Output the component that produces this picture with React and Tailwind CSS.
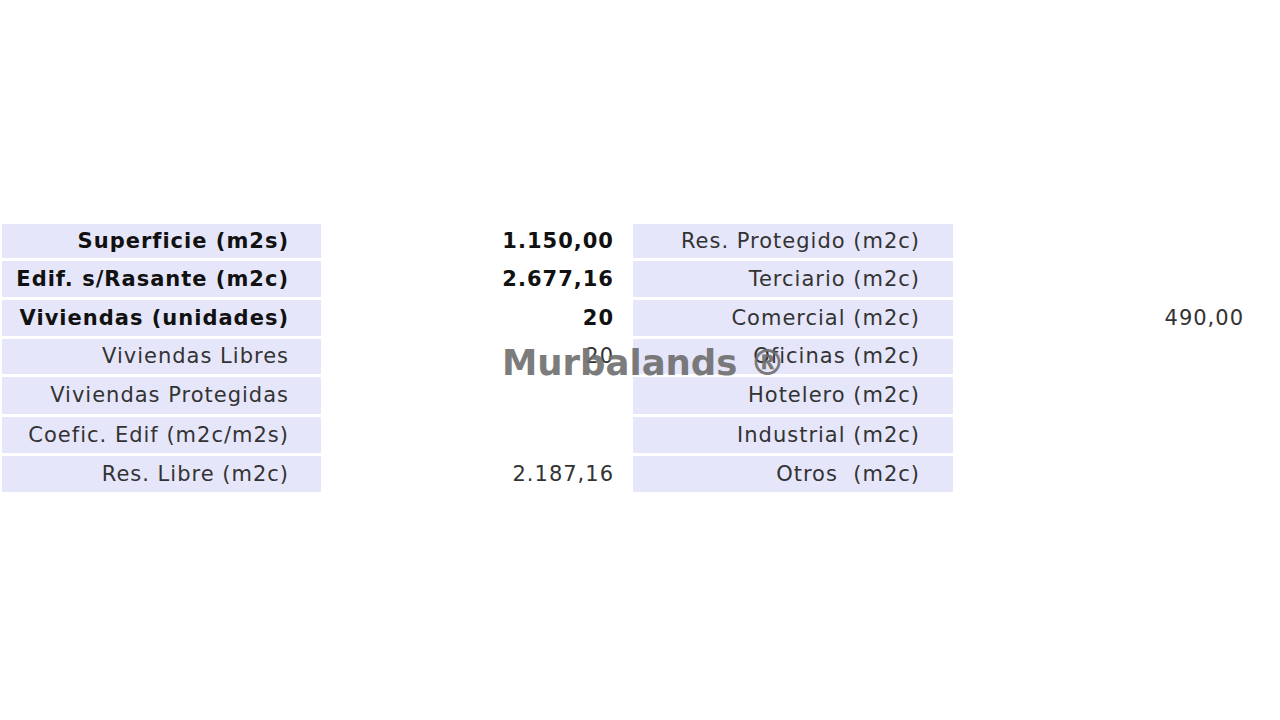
import React from "react";

const rows = [
  { h: "h-[34px]", l1: "Superficie (m2s)", v1: "1.150,00", b: true, l2: "Res. Protegido (m2c)", v2: "" },
  { h: "h-[36px]", l1: "Edif. s/Rasante (m2c)", v1: "2.677,16", b: true, l2: "Terciario (m2c)", v2: "" },
  { h: "h-[36px]", l1: "Viviendas (unidades)", v1: "20", b: true, l2: "Comercial (m2c)", v2: "490,00" },
  { h: "h-[35px]", l1: "Viviendas Libres", v1: "20", b: false, l2: "Oficinas (m2c)", v2: "" },
  { h: "h-[37px]", l1: "Viviendas Protegidas", v1: "", b: false, l2: "Hotelero (m2c)", v2: "" },
  { h: "h-[36px]", l1: "Coefic. Edif (m2c/m2s)", v1: "", b: false, l2: "Industrial (m2c)", v2: "" },
  { h: "h-[36px]", l1: "Res. Libre (m2c)", v1: "2.187,16", b: false, l2: "Otros\u00a0 (m2c)", v2: "" },
];

export default function App() {
  return (
    <div
      className="relative w-[1280px] h-[720px] bg-white overflow-hidden"
      style={{ fontFamily: '"DejaVu Sans", Verdana, sans-serif' }}
    >
      <div className="pt-[224px] pl-[2px] flex flex-col gap-[3px]">
        {rows.map((r, i) => (
          <div key={i} className={`flex ${r.h} text-[21px] leading-none tracking-[1px]`}>
            <div
              className={`w-[319px] bg-[#e6e6fa] flex items-center justify-end pr-[32px] ${
                r.b ? "font-bold text-[#111]" : "text-[#333]"
              }`}
            >
              {r.l1}
            </div>
            <div
              className={`w-[312px] flex items-center justify-end pr-[19px] ${
                r.b ? "font-bold text-[#111]" : "text-[#333]"
              }`}
            >
              {r.v1}
            </div>
            <div className="w-[320px] bg-[#e6e6fa] flex items-center justify-end pr-[33px] text-[#333]">
              {r.l2}
            </div>
            <div className="w-[325px] flex items-center justify-end pr-[34px] text-[#333]">
              {r.v2}
            </div>
          </div>
        ))}
      </div>
      <div className="absolute left-[502px] top-[345px] text-[35.5px] leading-none font-bold text-[#6e6e6e] opacity-90 whitespace-nowrap">
        Murbalands ®
      </div>
    </div>
  );
}
